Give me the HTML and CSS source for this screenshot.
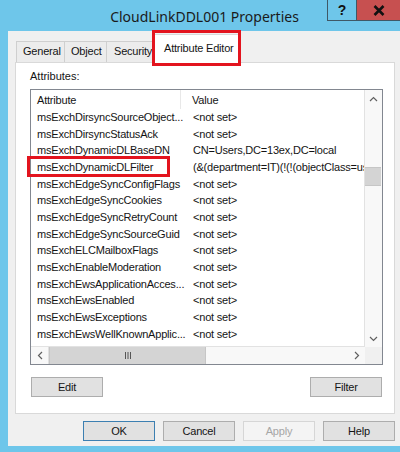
FILE: index.html
```html
<!DOCTYPE html>
<html lang="en">
<head>
  <meta charset="UTF-8" />
  <title>CloudLinkDDL001 Properties</title>
  <link rel="stylesheet" href="styles.css">
</head>
<body>
  <div class="window">
    <!-- Title bar -->
    <div class="titlebar">
      <div class="title">CloudLinkDDL001 Properties</div>
      <div class="caption-btn help-btn">?</div>
      <div class="caption-btn close-btn">
        <svg width="12" height="11" viewBox="0 0 12 11"><path d="M1.5 1 L10.5 10 M10.5 1 L1.5 10" stroke="#111" stroke-width="2.6" fill="none"/></svg>
      </div>
    </div>

    <div class="client">
      <!-- Tabs -->
      <div class="tabs">
        <div class="tab tab-general">General</div>
        <div class="tab tab-object">Object</div>
        <div class="tab tab-security">Security</div>
        <div class="tab tab-active">Attribute Editor</div>
      </div>

      <!-- Attribute Editor page -->
      <div class="panel">
        <div class="label">Attributes:</div>
        <div class="list">
          <div class="list-body">
            <div class="list-head">
              <span class="col-name">Attribute</span>
              <span class="col-value">Value</span>
            </div>
            <div class="rows">
              <div class="row"><span class="col-name">msExchDirsyncSourceObject...</span><span class="col-value">&lt;not set&gt;</span></div>
              <div class="row"><span class="col-name">msExchDirsyncStatusAck</span><span class="col-value">&lt;not set&gt;</span></div>
              <div class="row"><span class="col-name">msExchDynamicDLBaseDN</span><span class="col-value">CN=Users,DC=13ex,DC=local</span></div>
              <div class="row"><span class="col-name">msExchDynamicDLFilter</span><span class="col-value">(&amp;(department=IT)(!(!(objectClass=use</span></div>
              <div class="row"><span class="col-name">msExchEdgeSyncConfigFlags</span><span class="col-value">&lt;not set&gt;</span></div>
              <div class="row"><span class="col-name">msExchEdgeSyncCookies</span><span class="col-value">&lt;not set&gt;</span></div>
              <div class="row"><span class="col-name">msExchEdgeSyncRetryCount</span><span class="col-value">&lt;not set&gt;</span></div>
              <div class="row"><span class="col-name">msExchEdgeSyncSourceGuid</span><span class="col-value">&lt;not set&gt;</span></div>
              <div class="row"><span class="col-name">msExchELCMailboxFlags</span><span class="col-value">&lt;not set&gt;</span></div>
              <div class="row"><span class="col-name">msExchEnableModeration</span><span class="col-value">&lt;not set&gt;</span></div>
              <div class="row"><span class="col-name">msExchEwsApplicationAcces...</span><span class="col-value">&lt;not set&gt;</span></div>
              <div class="row"><span class="col-name">msExchEwsEnabled</span><span class="col-value">&lt;not set&gt;</span></div>
              <div class="row"><span class="col-name">msExchEwsExceptions</span><span class="col-value">&lt;not set&gt;</span></div>
              <div class="row"><span class="col-name">msExchEwsWellKnownApplic...</span><span class="col-value">&lt;not set&gt;</span></div>
            </div>
          </div>

          <!-- vertical scrollbar -->
          <div class="vscroll">
            <div class="sb-btn">
              <svg width="9" height="6" viewBox="0 0 9 6"><path d="M1 5 L4.5 1.5 L8 5" stroke="#606060" stroke-width="1.2" fill="none"/></svg>
            </div>
            <div class="vtrack"><div class="vthumb"></div></div>
            <div class="sb-btn">
              <svg width="9" height="6" viewBox="0 0 9 6"><path d="M1 1 L4.5 4.5 L8 1" stroke="#606060" stroke-width="1.2" fill="none"/></svg>
            </div>
          </div>

          <!-- horizontal scrollbar -->
          <div class="hscroll">
            <div class="sb-btn sb-left">
              <svg width="6" height="9" viewBox="0 0 6 9"><path d="M5 1 L1.5 4.5 L5 8" stroke="#606060" stroke-width="1.2" fill="none"/></svg>
            </div>
            <div class="hthumb">
              <svg width="8" height="7" viewBox="0 0 8 7"><path d="M1.5 0 V7 M4 0 V7 M6.5 0 V7" stroke="#555" stroke-width="1"/></svg>
            </div>
            <div class="htrack"></div>
            <div class="sb-btn">
              <svg width="6" height="9" viewBox="0 0 6 9"><path d="M1 1 L4.5 4.5 L1 8" stroke="#606060" stroke-width="1.2" fill="none"/></svg>
            </div>
          </div>
          <div class="corner"></div>

          <div class="mark"></div>
        </div>

        <div class="panel-actions">
          <button class="btn">Edit</button>
          <button class="btn">Filter</button>
        </div>
      </div>

      <!-- Dialog buttons -->
      <div class="dialog-actions">
        <button class="btn btn-default">OK</button>
        <button class="btn">Cancel</button>
        <button class="btn btn-disabled">Apply</button>
        <button class="btn">Help</button>
      </div>
    </div>
  </div>
</body>
</html>
```

FILE: styles.css
```css
body {
  margin: 0;
  font-family: 'Liberation Sans', Arial, sans-serif;
  font-size: 11px;
  color: #141414;
}
.window {
  width: 400px;
  height: 452px;
  background: #6ec6ea;
  overflow: hidden;
}

/* title bar */
.titlebar {
  display: flex;
  height: 31px;
}
.title {
  flex: 1;
  padding-left: 82px;
  text-align: center;
  font-family: 'Noto Sans', sans-serif;
  font-size: 14px;
  line-height: 33px;
  color: #1a1a1a;
}
.caption-btn {
  height: 21px;
  display: flex;
  align-items: center;
  justify-content: center;
}
.help-btn {
  width: 28px;
  border-left: 1px solid #3f5866;
  border-bottom: 1px solid #3f5866;
  height: 20px;
  font-family: 'Liberation Sans', sans-serif;
  font-weight: bold;
  font-size: 14px;
  color: #111;
}
.close-btn {
  width: 43px;
  height: 20px;
  background: #c75050;
  border-left: 1px solid #3f5866;
  border-bottom: 1px solid #3f5866;
}

.client {
  margin-left: 8px;
  width: 394px;
  height: 415px;
  background: #f0f0f0;
}

/* tabs */
.tabs {
  display: flex;
  align-items: flex-end;
  height: 31px;
  padding-left: 8px;
  letter-spacing: -0.2px;
}
.tab {
  box-sizing: border-box;
  height: 21px;
  line-height: 19px;
  padding-left: 6px;
  background: #ececec;
  border: 1px solid #cfcfcf;
  border-bottom: none;
  white-space: nowrap;
  overflow: hidden;
}
.tab-general { width: 49px; }
.tab-object { width: 43px; margin-left: -1px; }
.tab-security { width: 52px; margin-left: -1px; padding-left: 7px; }
.tab-active {
  position: relative;
  z-index: 2;
  width: 87px;
  height: 29px;
  margin-left: -5px;
  margin-bottom: -1px;
  padding: 5px 0 0 10px;
  line-height: 16px;
  background: #fff;
  border-color: #d9d9d9;
  overflow: visible;
}
.tab-active::after {
  content: "";
  position: absolute;
  top: -5px;
  left: -2px;
  right: -2px;
  bottom: -3px;
  border: 3px solid #e3141e;
}

/* property page */
.panel {
  box-sizing: border-box;
  height: 352px;
  margin: 0 7px;
  padding: 7px 0 0 14px;
  background: #fff;
  border: 1px solid #d9d9d9;
}
.label {
  line-height: 13px;
}
.list {
  position: relative;
  box-sizing: border-box;
  width: 353px;
  height: 276px;
  margin-top: 6px;
  border: 1px solid #828790;
  display: grid;
  grid-template-columns: 1fr 17px;
  grid-template-rows: 1fr 17px;
}
.list-body {
  overflow: hidden;
  white-space: nowrap;
  letter-spacing: -0.2px;
}
.list-head {
  display: flex;
  height: 19px;
  line-height: 20px;
}
.list-head .col-name {
  border-right: 1px solid #e8e8e8;
  width: 150px;
}
.row {
  display: flex;
  height: 16.67px;
  line-height: 16.67px;
}
.col-name {
  flex: none;
  box-sizing: border-box;
  width: 157px;
  padding-left: 6px;
}
.col-value {
  padding-left: 5px;
}
.list-head .col-value {
  padding-left: 11px;
}

/* scrollbars */
.sb-btn {
  flex: none;
  width: 17px;
  height: 17px;
  display: flex;
  align-items: center;
  justify-content: center;
}
.vscroll {
  display: flex;
  flex-direction: column;
  background: #f8f8f8;
  border-left: 1px solid #e2e2e2;
  margin-left: -1px;
}
.vtrack {
  flex: 1;
}
.vthumb {
  width: 16px;
  height: 19px;
  margin: 60px 0 0 0;
  background: #d4d4d4;
  border-top: 1px solid #c6c6c6;
  border-bottom: 1px solid #c6c6c6;
  box-sizing: border-box;
}
.hscroll {
  display: flex;
  background: #f8f8f8;
  border-top: 1px solid #e2e2e2;
  margin-top: -1px;
}
.sb-left {
  border-right: 1px solid #e0e0e0;
}
.hthumb {
  width: 155px;
  background: #d4d4d4;
  border-left: 1px solid #c6c6c6;
  border-right: 1px solid #c6c6c6;
  display: flex;
  align-items: center;
  justify-content: center;
}
.htrack {
  flex: 1;
}
.corner {
  background: #f0f0f0;
}

/* highlight around the filter attribute */
.mark {
  position: absolute;
  left: -4px;
  top: 66px;
  width: 143px;
  height: 21px;
  box-sizing: border-box;
  border: 3px solid #e3141e;
}

/* buttons */
.btn {
  box-sizing: border-box;
  width: 72px;
  height: 20px;
  padding: 0;
  font-family: 'Liberation Sans', Arial, sans-serif;
  font-size: 11px;
  letter-spacing: -0.2px;
  color: #141414;
  background: #e1e1e1;
  border: 1px solid #adadad;
}
.btn-default {
  border-color: #3c7fb1;
}
.btn-disabled {
  color: #a6a6a6;
  background: #f4f4f4;
  border-color: #d6d6d6;
}
.panel-actions {
  display: flex;
  justify-content: space-between;
  width: 351px;
  margin: 12px 0 0 1px;
}
.dialog-actions {
  display: flex;
  justify-content: flex-end;
  gap: 8px;
  margin-top: 7px;
  padding-right: 7px;
}
```
